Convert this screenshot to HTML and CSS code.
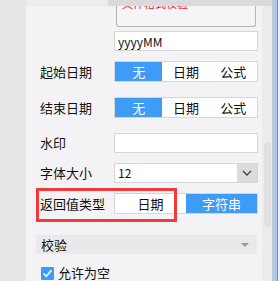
FILE: index.html
```html
<!DOCTYPE html>
<html lang="zh-CN">
<head>
    <meta charset="UTF-8">
    <title>属性面板</title>
    <link rel="stylesheet" href="styles.css">
</head>
<body>
    <div class="frame">
        <div class="side"></div>
        <div class="panel">
            <div class="topbar">
                <div class="topbar-left"></div>
                <div class="topbar-right"></div>
            </div>

            <div class="row row-tip">
                <div class="tip-box"><span>文件格式校验</span></div>
            </div>

            <div class="row row-format">
                <input class="text-input" type="text" value="yyyyMM">
            </div>

            <div class="row row-seg">
                <label>起始日期</label>
                <div class="seg seg-3">
                    <span class="seg-item active">无</span>
                    <span class="seg-item">日期</span>
                    <span class="seg-item">公式</span>
                </div>
            </div>

            <div class="row row-seg">
                <label>结束日期</label>
                <div class="seg seg-3">
                    <span class="seg-item active">无</span>
                    <span class="seg-item">日期</span>
                    <span class="seg-item">公式</span>
                </div>
            </div>

            <div class="row row-input">
                <label>水印</label>
                <input class="text-input" type="text" value="">
            </div>

            <div class="row row-input">
                <label>字体大小</label>
                <div class="select">
                    <span class="select-value">12</span>
                    <span class="select-arrow">
                        <svg width="10" height="6" viewBox="0 0 10 6"><path d="M1 1 L5 5 L9 1" fill="none" stroke="#444" stroke-width="1.4"/></svg>
                    </span>
                </div>
            </div>

            <div class="row row-seg row-return">
                <label>返回值类型</label>
                <div class="seg seg-2">
                    <span class="seg-item">日期</span>
                    <span class="seg-item active">字符串</span>
                </div>
                <div class="highlight"></div>
            </div>

            <div class="section-head">
                <span>校验</span>
                <span class="caret"></span>
            </div>

            <div class="row row-check">
                <span class="checkbox">
                    <svg width="13" height="13" viewBox="0 0 13 13"><path d="M2.5 6.5 L5.3 9.3 L10.5 3.2" fill="none" stroke="#fff" stroke-width="1.6"/></svg>
                </span>
                <span class="check-label">允许为空</span>
            </div>
        </div>
        <div class="scroll">
            <div class="scroll-top"></div>
            <div class="thumb"></div>
        </div>
        <div class="edge">
            <div class="edge-line"></div>
            <div class="edge-blue"></div>
            <div class="edge-dark"></div>
        </div>
    </div>
</body>
</html>
```

FILE: styles.css
```css
html, body {
    margin: 0;
    padding: 0;
}

body {
    width: 280px;
    height: 281px;
    overflow: hidden;
    background-color: #f3f3f5;
    font-family: "Noto Sans CJK SC", "Noto Sans", sans-serif;
    font-size: 13px;
    color: #111;
}

.frame {
    display: flex;
    height: 281px;
}

.side {
    width: 26px;
    background-color: #e6e6e6;
}

.panel {
    width: 236px;
    display: flex;
    flex-direction: column;
}

.topbar {
    display: flex;
    height: 6px;
}

.topbar-left {
    width: 82px;
    background-color: #ececee;
}

.topbar-right {
    flex: 1;
    background-color: #dadadd;
}

.row {
    display: flex;
    align-items: center;
    padding-left: 14px;
    position: relative;
}

.row label {
    width: 74px;
    line-height: 20px;
}

/* cut-off tip box at the top */
.row-tip {
    padding-left: 90px;
}

.tip-box {
    width: 138px;
    height: 20px;
    border: 1px solid #b5b5b8;
    border-top: none;
    border-radius: 0 0 3px 3px;
    background-color: #f5f5f7;
    overflow: hidden;
    box-sizing: content-box;
}

.tip-box span {
    display: block;
    margin: -13px 0 0 5px;
    color: #e8141e;
    font-size: 11px;
    line-height: 20px;
}

.row-format {
    margin-top: 4px;
    padding-left: 88px;
}

.text-input {
    width: 144px;
    height: 20px;
    box-sizing: border-box;
    border: 1px solid #d6d6d8;
    background-color: #fff;
    padding: 0 3px;
    font-family: "Noto Sans CJK SC", "Noto Sans", sans-serif;
    font-size: 12px;
    color: #111;
    outline: none;
}

.row-seg {
    margin-top: 10px;
}

.row-seg + .row-seg {
    margin-top: 15px;
}

.row-input {
    margin-top: 15px;
}

.row-input + .row-input {
    margin-top: 10px;
}

.row-input + .row-return {
    margin-top: 10px;
}

.seg {
    display: flex;
    width: 144px;
    height: 21px;
    box-sizing: border-box;
    border: 1px solid #d6d6d8;
    background-color: #fff;
}

.seg-item {
    flex: 1;
    text-align: center;
    line-height: 19px;
}

.seg-item.active {
    background-color: #3f9cf6;
    color: #fff;
}

.select {
    display: flex;
    width: 144px;
    height: 20px;
    box-sizing: border-box;
    border: 1px solid #d6d6d8;
    background-color: #fff;
}

.select-value {
    flex: 1;
    padding-left: 3px;
    font-size: 12px;
    line-height: 18px;
}

.select-arrow {
    width: 20px;
    display: flex;
    align-items: center;
    justify-content: center;
    background-color: #dcdcdf;
}

.highlight {
    position: absolute;
    left: 10px;
    top: -5px;
    width: 141px;
    height: 34px;
    box-sizing: border-box;
    border: 3px solid #f23a3c;
}

.section-head {
    display: flex;
    align-items: center;
    justify-content: space-between;
    margin: 21px 5px 0 10px;
    height: 19px;
    padding: 0 8px 0 5px;
    background-color: #e9e9eb;
}

.caret {
    width: 0;
    height: 0;
    border-left: 4px solid transparent;
    border-right: 4px solid transparent;
    border-top: 4px solid #9a9a9c;
}

.row-check {
    margin-top: 12px;
    padding-left: 15px;
}

.checkbox {
    display: flex;
    width: 13px;
    height: 13px;
    background-color: #3f9cf6;
    border-radius: 1px;
}

.check-label {
    margin-left: 4px;
    line-height: 14px;
}

.scroll {
    width: 10px;
    background-color: #ececee;
    display: flex;
    flex-direction: column;
    align-items: center;
}

.scroll-top {
    height: 6px;
    width: 100%;
    background-color: #dadadd;
}

.thumb {
    margin-top: 136px;
    width: 7px;
    height: 85px;
    border-radius: 4px;
    background-color: #e0e0e2;
}

.edge {
    flex: 1;
    display: flex;
    background-color: #f0f0f2;
}

.edge-line {
    width: 1px;
    background-color: #c8c8cc;
}

.edge-blue {
    width: 4px;
    background-color: #a9cbf3;
}

.edge-dark {
    width: 1px;
    background-color: #5d8fd0;
}
```
